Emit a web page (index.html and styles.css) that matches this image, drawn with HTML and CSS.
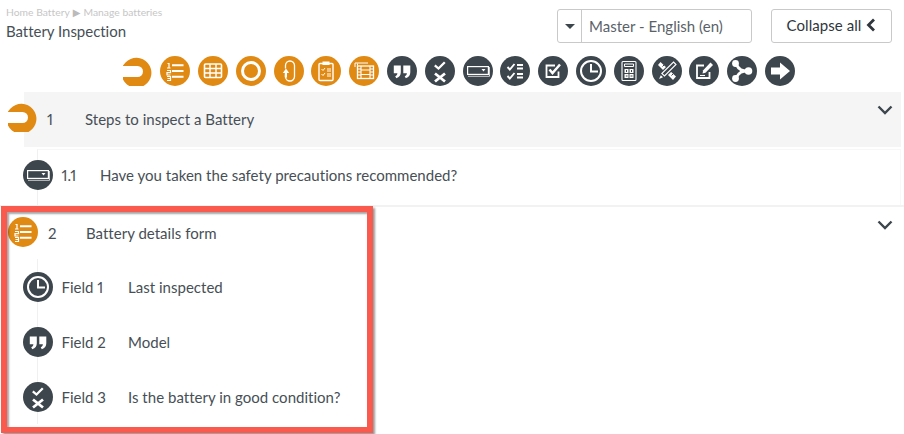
FILE: index.html
```html
<!DOCTYPE html>
<html lang="en">
<head>
<meta charset="utf-8">
<title>Battery Inspection</title>
<link rel="stylesheet" href="styles.css">
</head>
<body>
<svg class="defs" width="0" height="0" aria-hidden="true">
  <defs>
    <symbol id="i-start" viewBox="0 0 30 30"><path class="bg" d="M2.500 6.500A15 15 0 1 1 0 23.500V9.500Z"/><path class="wh" d="M-1 10H14.500A5.500 5.500 0 0 1 14.500 21H-1Z"/></symbol>
    <symbol id="i-list" viewBox="0 0 30 30"><circle class="bg" cx="15" cy="15" r="15"/><path class="ln" stroke-width="1.900" d="M12 9.300H23.500M12 15H23.500M12 20.700H23.500"/><path class="ln" stroke-width="1.200" d="M7.500 7.500H9V12M7 12H10.500M7 14.500H10.500V16.700H7V19H10.500M7 20.500H10.500V24.500H7M7.500 22.500H10.500"/></symbol>
    <symbol id="i-table" viewBox="0 0 30 30"><circle class="bg" cx="15" cy="15" r="15"/><rect class="ln" stroke-width="1.600" x="6.500" y="8" width="17" height="13.500" rx="1"/><path class="ln" stroke-width="1.400" d="M12 8V21.500M18 8V21.500M6.500 12.500H23.500M6.500 17H23.500"/></symbol>
    <symbol id="i-ring" viewBox="0 0 30 30"><circle class="bg" cx="15" cy="15" r="15"/><circle class="ln" stroke-width="3" cx="15" cy="15" r="8.500"/></symbol>
    <symbol id="i-loop" viewBox="0 0 30 30"><circle class="bg" cx="15" cy="15" r="15"/><path class="ln" stroke-width="1.300" d="M11.500 12.500V9.500A4.500 4.500 0 0 1 20.500 9.500V20.500A4.500 4.500 0 0 1 11.500 20.500V18.500"/><path class="wh" d="M12 12.500 8.800 17H10.800V21.500H13V17H15.200Z"/></symbol>
    <symbol id="i-clip" viewBox="0 0 30 30"><circle class="bg" cx="15" cy="15" r="15"/><rect class="ln" stroke-width="1.400" x="8" y="7.500" width="14" height="17" rx="1"/><path class="wh" d="M11.500 5.500H18.500V9H11.500Z"/><path class="ln" stroke-width="1" d="M10.500 13 12 14.500 14 12M10.500 18 12 19.500 14 17M16 13H20M16 15H20M16 18H20M16 20H20"/></symbol>
    <symbol id="i-film" viewBox="0 0 30 30"><circle class="bg" cx="15" cy="15" r="15"/><path class="ln" stroke-width="1" d="M6 11V7H19M8.500 9.500V7.500"/><rect class="ln" stroke-width="1.300" x="8.500" y="10" width="16" height="12.500"/><path class="ln" stroke-width="1.100" d="M12 10V22.500M21 10V22.500M12 14H21M12 18.500H21M8.500 13H12M8.500 16H12M8.500 19H12M21 13H24.500M21 16H24.500M21 19H24.500"/></symbol>
    <symbol id="i-quote" viewBox="0 0 30 30"><circle class="bg" cx="15" cy="15" r="15"/><path class="wh" d="M6.800 9.500H13.800V16.300C13.800 19 12.300 21.300 9.300 22.300L8.200 20.300C9.700 19.700 10.300 18.800 10.400 17.300H6.800ZM16.300 9.500H23.300V16.300C23.300 19 21.800 21.300 18.800 22.300L17.700 20.300C19.200 19.700 19.800 18.800 19.900 17.300H16.300Z"/></symbol>
    <symbol id="i-yesno" viewBox="0 0 30 30"><circle class="bg" cx="15" cy="15" r="15"/><path class="ln" stroke-width="2.300" d="M9.800 9.300 13.500 12.500 19.800 6.300"/><path class="ln" stroke-width="2.800" d="M10 17.500 20 25.500M20 17.500 10 25.500"/></symbol>
    <symbol id="i-drop" viewBox="0 0 30 30"><circle class="bg" cx="15" cy="15" r="15"/><rect class="ln" stroke-width="1.200" x="4.600" y="10.600" width="20.800" height="7.800"/><path class="ln" stroke-width="1" d="M5 20.300H26.500V11" opacity=".75"/><path class="wh" d="M18.500 13H22.500L20.500 15.500Z"/></symbol>
    <symbol id="i-check" viewBox="0 0 30 30"><circle class="bg" cx="15" cy="15" r="15"/><path class="ln" stroke-width="1.900" d="M7.500 11 9.800 13.500 14.500 8M7.500 20 9.800 22.500 14.500 17M17 9H23M17 12.500H23M17 18H23M17 21.500H23"/></symbol>
    <symbol id="i-box" viewBox="0 0 30 30"><circle class="bg" cx="15" cy="15" r="15"/><path class="ln" stroke-width="1.800" d="M20.500 15.500V21H8.500V9.500H17"/><path class="ln" stroke-width="2.500" d="M11.500 13.500 14.500 17 22 8.500"/></symbol>
    <symbol id="i-clock" viewBox="0 0 30 30"><circle class="bg" cx="15" cy="15" r="15"/><circle class="ln" stroke-width="2" cx="15" cy="15" r="10"/><path class="ln" stroke-width="2" d="M15 8V15.500H22"/></symbol>
    <symbol id="i-calc" viewBox="0 0 30 30"><circle class="bg" cx="15" cy="15" r="15"/><rect class="ln" stroke-width="1.100" x="8" y="5.500" width="14" height="19" rx="1"/><path class="ln" stroke-width="1" d="M10.500 8H19.500V10.500H10.500Z"/><path class="wh" d="M10.500 13H14.500V17H10.500ZM15.500 13H19.500V17H15.500ZM10.500 18H14.500V22H10.500ZM15.500 18H19.500V22H15.500Z"/><path class="bln" stroke-width="1" d="M12.500 14V16M17.500 14V16M11.800 20H13.500M16.500 20H18.500"/></symbol>
    <symbol id="i-tools" viewBox="0 0 30 30"><circle class="bg" cx="15" cy="15" r="15"/><path class="wh" d="M8.500 6 24 20.500 21 24 6 9Z"/><path class="bln" stroke-width="1" d="M10.500 10.500 12 9M13.500 13.500 15 12M16.500 16.500 18 15M19.500 19.500 21 18"/><path class="bg" d="M21.500 3.500 26.500 8.500 13 22 5 25 8 17Z"/><path class="ln" stroke-width="1.100" d="M21.500 6 24 8.500 12.500 20 9.800 17.500Z"/><path class="wh" d="M8.800 19.200 11 21.300 7 23Z"/></symbol>
    <symbol id="i-sign" viewBox="0 0 30 30"><circle class="bg" cx="15" cy="15" r="15"/><path class="ln" stroke-width="1.800" d="M20.500 16V22H8V9.500H15"/><path class="wh" d="M21.500 6.500 24 9 16.500 16.800 13.500 17.500 14.200 14.300Z"/><path class="ln" stroke-width="1.100" d="M11 19.500H16"/></symbol>
    <symbol id="i-branch" viewBox="0 0 30 30"><circle class="bg" cx="15" cy="15" r="15"/><path class="ln" stroke-width="2.800" d="M9 8C12 14 15 15 21 15M9 22C12 16 15 15 21 15"/><circle class="wh" cx="8.500" cy="7.500" r="3.400"/><circle class="wh" cx="8.500" cy="22.500" r="3.400"/><circle class="wh" cx="21.500" cy="15" r="3.800"/></symbol>
    <symbol id="i-next" viewBox="0 0 30 30"><circle class="bg" cx="15" cy="15" r="15"/><path class="wh" d="M6 11.500H15V6.500L25 15 15 23.500V18.500H6Z"/></symbol>
  </defs>
</svg>

<header class="top">
  <div class="heading">
    <div class="crumbs">Home Battery<span class="crumb-sep">▶</span>Manage batteries</div>
    <h1 class="title">Battery Inspection</h1>
  </div>
  <div class="controls">
    <div class="select"><span class="select-arrow"></span><span class="select-text">Master - English (en)</span></div>
    <button class="collapse" type="button">Collapse all<svg class="collapse-icon" viewBox="0 0 10 14"><path d="M8 1.500 2.500 7 8 12.500"/></svg></button>
  </div>
</header>

<nav class="toolbar">
  <svg class="ic orange"><use href="#i-start"/></svg>
  <svg class="ic orange"><use href="#i-list"/></svg>
  <svg class="ic orange"><use href="#i-table"/></svg>
  <svg class="ic orange"><use href="#i-ring"/></svg>
  <svg class="ic orange"><use href="#i-loop"/></svg>
  <svg class="ic orange"><use href="#i-clip"/></svg>
  <svg class="ic orange"><use href="#i-film"/></svg>
  <svg class="ic dark"><use href="#i-quote"/></svg>
  <svg class="ic dark"><use href="#i-yesno"/></svg>
  <svg class="ic dark"><use href="#i-drop"/></svg>
  <svg class="ic dark"><use href="#i-check"/></svg>
  <svg class="ic dark"><use href="#i-box"/></svg>
  <svg class="ic dark"><use href="#i-clock"/></svg>
  <svg class="ic dark"><use href="#i-calc"/></svg>
  <svg class="ic dark"><use href="#i-tools"/></svg>
  <svg class="ic dark"><use href="#i-sign"/></svg>
  <svg class="ic dark"><use href="#i-branch"/></svg>
  <svg class="ic dark"><use href="#i-next"/></svg>
</nav>

<main class="tree">
  <section class="step step-one">
    <div class="step-head shaded">
      <svg class="ic orange step-icon"><use href="#i-start"/></svg>
      <span class="step-num">1</span>
      <span class="step-name">Steps to inspect a Battery</span>
      <svg class="chev" viewBox="0 0 16 10"><path d="M1.500 1.500 8 8 14.500 1.500"/></svg>
    </div>
    <div class="children child-single">
      <div class="child">
        <svg class="ic dark"><use href="#i-drop"/></svg>
        <span class="child-num short">1.1</span>
        <span class="child-name">Have you taken the safety precautions recommended?</span>
      </div>
    </div>
  </section>
  <section class="step step-two">
    <div class="step-head">
      <svg class="ic orange step-icon"><use href="#i-list"/></svg>
      <span class="step-num">2</span>
      <span class="step-name">Battery details form</span>
      <svg class="chev" viewBox="0 0 16 10"><path d="M1.500 1.500 8 8 14.500 1.500"/></svg>
    </div>
    <div class="children">
      <div class="child">
        <svg class="ic dark"><use href="#i-clock"/></svg>
        <span class="child-num">Field 1</span>
        <span class="child-name">Last inspected</span>
      </div>
      <div class="child">
        <svg class="ic dark"><use href="#i-quote"/></svg>
        <span class="child-num">Field 2</span>
        <span class="child-name">Model</span>
      </div>
      <div class="child">
        <svg class="ic dark"><use href="#i-yesno"/></svg>
        <span class="child-num">Field 3</span>
        <span class="child-name">Is the battery in good condition?</span>
      </div>
    </div>
  </section>
  <div class="highlight"></div>
</main>
</body>
</html>
```

FILE: styles.css
```css
* { box-sizing: border-box; }
html, body { margin: 0; padding: 0; }
body {
  width: 904px;
  height: 434px;
  overflow: hidden;
  background: #fff;
  color: #474f56;
  font-family: "Lato", "Liberation Sans", sans-serif;
  font-size: 15px;
  letter-spacing: .02px;
  font-variant-numeric: proportional-nums;
  position: relative;
}
.defs { position: absolute; }
.top {
  display: flex;
  justify-content: space-between;
  padding: 9px 12px 0 6px;
  height: 56px;
}
.heading { margin-top: -3px; }
.crumbs { font-size: 10.300px; color: #c6c6c6; line-height: 12px; }
.crumb-sep { font-size: 10px; margin: 0 3px; color: #bbb; font-family: "DejaVu Sans", sans-serif; }
.title { margin: 2px 0 0; font-size: 15px; font-weight: 400; line-height: 20px; letter-spacing: -.03px; }
.controls { display: flex; gap: 19px; }
.select {
  display: flex;
  width: 195px;
  height: 34px;
  border: 1px solid #c9c9c9;
  border-radius: 3px;
}
.select-arrow {
  width: 24px;
  border-right: 1px solid #c9c9c9;
  display: flex;
  align-items: center;
  justify-content: center;
}
.select-arrow::before {
  content: "";
  border-left: 5px solid transparent;
  border-right: 5px solid transparent;
  border-top: 5px solid #3d464d;
}
.select-text { padding-left: 7px; line-height: 33px; color: #5a6269; }
.collapse {
  width: 121px;
  height: 34px;
  border: 1px solid #c9c9c9;
  border-radius: 3px;
  background: #fff;
  color: #2f363c;
  font: inherit;
  letter-spacing: .06px;
  padding: 0 0 2px;
  display: flex;
  align-items: center;
  justify-content: center;
  gap: 5px;
}
.collapse-icon { width: 10px; height: 14px; fill: none; stroke: #2f363c; stroke-width: 2.800; }
.toolbar {
  display: flex;
  gap: 7.800px;
  padding-left: 122.500px;
  height: 36px;
}
.ic { width: 30px; height: 30px; flex: none; overflow: hidden; }
.orange { --bg: #e08a14; }
.dark { --bg: #3d464d; }
.bg { fill: var(--bg); }
.wh { fill: #fff; }
.ln { fill: none; stroke: #fff; }
.bln { fill: none; stroke: var(--bg); }
.tree { position: relative; }
.step-head {
  display: flex;
  align-items: center;
  height: 55px;
  position: relative;
}
.step-one .step-head span { padding-bottom: 2px; }
.shaded { background: #f5f5f5; margin-left: 24px; margin-right: 3px; }
.step-icon { position: absolute; left: -16.500px; top: 10px; }
.step-one .step-num { margin-left: 23px; width: 38px; }
.step-two .step-head { margin-left: 24px; margin-right: 3px; height: 52px; align-items: flex-start; padding-top: 17px; }
.step-two .step-num { margin-left: 24px; width: 38px; }
.chev {
  position: absolute;
  right: 8px;
  top: 13px;
  width: 16px;
  height: 10px;
  fill: none;
  stroke: #3d464d;
  stroke-width: 2.400;
}
.children {
  margin-left: 37px;
  border-left: 1px solid #f0f0f0;
  margin-right: 3px;
}
.child-single {
  height: 56px;
  margin-top: 2px;
  border-top: 1px solid #f7f7f7;
  border-right: 1px solid #f8f8f8;
}
.child-single .child { height: 50px; }
.step-two { border-top: 2px solid #f2f2f2; }
.child {
  display: flex;
  align-items: center;
  height: 55px;
  margin-left: -15px;
}
.child-num { margin-left: 8.500px; width: 66.500px; }
.child-num.short { width: 38.500px; }
.highlight {
  position: absolute;
  left: 1px;
  top: 114px;
  width: 372px;
  height: 227px;
  border: 6px solid #fa5a4e;
  box-shadow: 2px 2px 2px rgba(0, 0, 0, .4), inset 2px 2px 2px rgba(0, 0, 0, .35);
  pointer-events: none;
}
```
